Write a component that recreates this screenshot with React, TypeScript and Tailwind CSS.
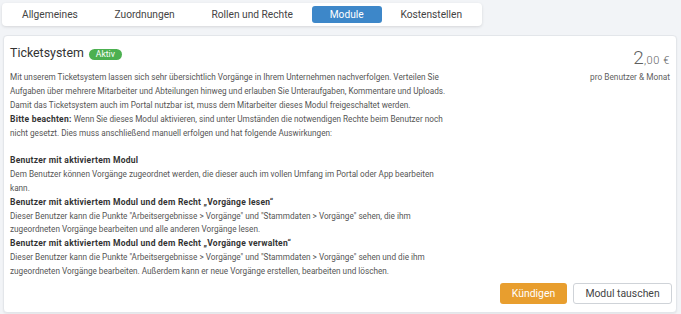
import React from "react";

const tabs = ["Allgemeines", "Zuordnungen", "Rollen und Rechte", "Module", "Kostenstellen"];

const B = ({ children }: { children: React.ReactNode }) => (
  <span className="font-bold text-[#333] text-[8.5px] tracking-[0.25px]">{children}</span>
);

export default function App() {
  return (
    <div
      className="w-[681px] h-[314px] bg-[#f2f4f7] overflow-hidden pt-[1px] px-[2px]"
      style={{ fontFamily: "Roboto, 'Liberation Sans', sans-serif" }}
    >
      <div className="inline-flex gap-[0.75px] px-[2px] py-[3px] bg-white rounded-[4px] shadow-[0_1px_3px_rgba(0,0,0,0.12)]">
        {tabs.map((t) => (
          <div
            key={t}
            className={
              t === "Module"
                ? "h-[17px] px-[18px] flex items-center rounded-[3px] bg-[#3d87c9] text-white text-[10.2px]"
                : "h-[17px] px-[18px] flex items-center rounded-[3px] text-[#444] text-[10.2px]"
            }
          >
            {t}
          </div>
        ))}
      </div>

      <div className="mt-[9px] ml-[1px] w-[674px] h-[278px] bg-white rounded-[4px] border border-[#e3e6ea] shadow-[0_1px_2px_rgba(0,0,0,0.06)] pl-[6px] pr-[4px] pt-[9px] pb-[6px] flex flex-col">
        <div className="flex">
          <div className="flex-1">
            <div className="flex items-center gap-[5px] h-[17px]">
              <span className="text-[12.4px] text-[#333]">Ticketsystem</span>
              <span className="h-[11px] px-[7px] rounded-full bg-[#4cb050] text-white text-[8.6px] flex items-center mt-[1px]">
                Aktiv
              </span>
            </div>
            <div className="mt-[9px] text-[8.2px] leading-[13.85px] text-[#555] whitespace-nowrap">
              <div>Mit unserem Ticketsystem lassen sich sehr übersichtlich Vorgänge in Ihrem Unternehmen nachverfolgen. Verteilen Sie</div>
              <div>Aufgaben über mehrere Mitarbeiter und Abteilungen hinweg und erlauben Sie Unteraufgaben, Kommentare und Uploads.</div>
              <div>Damit das Ticketsystem auch im Portal nutzbar ist, muss dem Mitarbeiter dieses Modul freigeschaltet werden.</div>
              <div>
                <B>Bitte beachten:</B> Wenn Sie dieses Modul aktivieren, sind unter Umständen die notwendigen Rechte beim Benutzer noch
              </div>
              <div>nicht gesetzt. Dies muss anschließend manuell erfolgen und hat folgende Auswirkungen:</div>
              <div className="h-[13.85px]" />
              <div><B>Benutzer mit aktiviertem Modul</B></div>
              <div>Dem Benutzer können Vorgänge zugeordnet werden, die dieser auch im vollen Umfang im Portal oder App bearbeiten</div>
              <div>kann.</div>
              <div><B>Benutzer mit aktiviertem Modul und dem Recht „Vorgänge lesen“</B></div>
              <div>Dieser Benutzer kann die Punkte "Arbeitsergebnisse &gt; Vorgänge" und "Stammdaten &gt; Vorgänge" sehen, die ihm</div>
              <div>zugeordneten Vorgänge bearbeiten und alle anderen Vorgänge lesen.</div>
              <div><B>Benutzer mit aktiviertem Modul und dem Recht „Vorgänge verwalten“</B></div>
              <div>Dieser Benutzer kann die Punkte "Arbeitsergebnisse &gt; Vorgänge" und "Stammdaten &gt; Vorgänge" sehen und die ihm</div>
              <div>zugeordneten Vorgänge bearbeiten. Außerdem kann er neue Vorgänge erstellen, bearbeiten und löschen.</div>
            </div>
          </div>
          <div className="text-right text-[#5f5f5f] pt-[3px] pr-[2px]">
            <div className="leading-[20px] font-light">
              <span className="text-[19px]">2</span>
              <span className="text-[11px] tracking-[0.6px]">,00 €</span>
            </div>
            <div className="text-[8.3px] mt-[0px]">pro Benutzer &amp; Monat</div>
          </div>
        </div>
        <div className="mt-auto flex justify-end gap-[6px] pr-[0px] mb-[2px]">
          <button className="h-[21px] w-[67px] rounded-[3px] bg-[#e89e2e] text-white text-[10.4px]">
            Kündigen
          </button>
          <button className="h-[21px] w-[99px] rounded-[3px] bg-white border border-[#cfd3d8] text-[#444] text-[10.4px]">
            Modul tauschen
          </button>
        </div>
      </div>
    </div>
  );
}
